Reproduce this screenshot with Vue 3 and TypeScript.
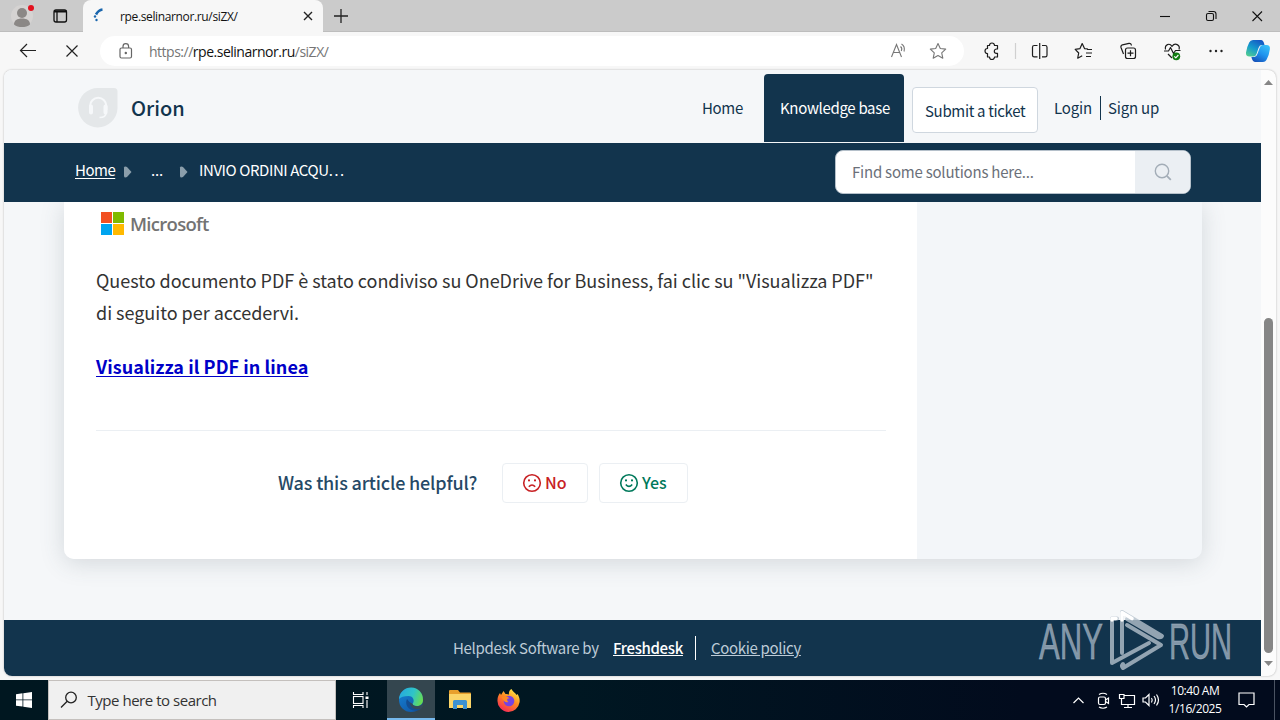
<script setup lang="ts">
interface Crumb { label: string; cls: string }
const crumbs: Crumb[] = [
  { label: 'Home', cls: 'crumb-home' },
  { label: '...', cls: 'crumb-dots' },
  { label: 'INVIO ORDINI ACQU…', cls: 'crumb-last' },
]
const address = { scheme: 'https://', host: 'rpe.selinarnor.ru', path: '/siZX/' }
</script>

<template>
  <div class="desktop">
    <header class="tabstrip">
      <div class="tab-left">
        <svg width="83" height="32" viewBox="0 0 83 32">
          <circle cx="22" cy="16" r="11" fill="#d5d3d2" />
          <circle cx="22" cy="13" r="5" fill="#8b8886" />
          <path d="M14 24.500c0-4 3-6 8-6s8 2 8 6c-2 2-5 2.500-8 2.500s-6-.5-8-2.500z" fill="#8b8886" />
          <circle cx="31" cy="8" r="3" fill="#e3121f" />
          <rect x="54" y="10" width="12.500" height="12" rx="2" fill="none" stroke="#111" stroke-width="1.300" />
          <path d="M54 11.500h12.500" stroke="#111" stroke-width="2" /><path d="M57 11v11" stroke="#111" stroke-width="1.300" />
        </svg>
      </div>
      <div class="tab">
        <svg width="37" height="32" viewBox="0 0 37 32" fill="none">
          <path d="M19.500 9.500c-3 .4-5 2.300-6.500 5" stroke="#1a66ad" stroke-width="2.600" />
          <circle cx="12" cy="16.500" r="1.200" fill="#1a66ad" /><circle cx="13.500" cy="20" r="1.200" fill="#1a66ad" />
        </svg>
        <span class="tab-title">rpe.selinarnor.ru/siZX/</span>
        <svg class="tab-close" width="10" height="10" viewBox="0 0 10 10"><path d="M1 1l8 8M9 1l-8 8" stroke="#222" stroke-width="1.400" /></svg>
      </div>
      <svg class="plus" width="14" height="14" viewBox="0 0 14 14"><path d="M7 0v14M0 7h14" stroke="#222" stroke-width="1.300" /></svg>
      <svg class="wincontrols" width="120" height="32" viewBox="0 0 120 32" fill="none" stroke="#111" stroke-width="1.100">
        <path d="M17 16.500h10" />
        <rect x="63.500" y="13.500" width="7" height="7" rx="1.500" />
        <path d="M65.500 11.500h5a2.500 2.500 0 0 1 2.500 2.500v5" />
        <path d="M109.500 11.500l9.500 9.500M119 11.500l-9.500 9.500" />
      </svg>
    </header>

    <div class="toolbar">
      <svg class="nav" width="100" height="38" viewBox="0 0 100 38" fill="none" stroke="#222" stroke-width="1.200">
        <path d="M36 18.500H20.500M27 12l-6.500 6.500L27 25M66.500 13.500l11 11M77.500 13.500l-11 11" />
      </svg>
      <div class="address">
        <svg class="lock" width="14" height="16" viewBox="0 0 14 16" fill="none" stroke="#666" stroke-width="1.200">
          <rect x="1" y="5" width="11.500" height="10" rx="1.500" /><path d="M4 5V3.500a2.800 2.800 0 0 1 5.600 0V5" /><circle cx="6.800" cy="10" r=".6" fill="#555" />
        </svg>
        <span class="url">{{ address.scheme }}<b>{{ address.host }}</b>{{ address.path }}</span>
        <svg class="addr-icons" width="80" height="30" viewBox="0 0 80 30" fill="none" stroke="#777" stroke-width="1.100">
          <path d="M7 21.500L12 9l5 12.500M8.800 17h6.500M16 11c1.300 1 1.500 3 .8 4.500M17 8.500c3 1.800 3.300 4.500 2.500 7.500" transform="translate(.5 -.5)" />
          <path d="M54 7.500l2.300 5 5.400.6-4 3.700 1.100 5.400-4.800-2.700-4.800 2.700 1.100-5.400-4-3.700 5.400-.6z" stroke-linejoin="round" />
        </svg>
      </div>
      <svg class="tools" width="316" height="38" viewBox="964 32 316 38" fill="none" stroke="#1d1d1d" stroke-width="1.200" stroke-linejoin="round">
        <path d="M987.500 45.500h2a2.500 2.500 0 0 1 5 0h3v3.500h-1a2.200 2.200 0 0 0 0 4.400h1V57h-3a2.500 2.500 0 0 1-5 0h-2v-3.500a2.500 2.500 0 0 1 0-5z" />
        <path d="M1015.500 43v16" stroke="#d0d0d0" />
        <path d="M1037.500 45.500h-3.300q-1.700 0-1.700 1.700v8q0 1.600 1.700 1.600h3.300M1042 45.500h3.300q1.700 0 1.700 1.700v8q0 1.600-1.700 1.600H1042M1039.700 43v16" />
        <path d="M1088 49l-3.500-.4-2.300-5-2.200 5-4.800.8 3.500 3.600-1 5.200 4.500-2.400M1087 49.500h5M1086 53h6M1086 56.500h5" />
        <rect x="1125.500" y="48" width="10" height="10.500" rx="2" />
        <path d="M1130.500 50.200v6M1127.500 53.200h6M1123.500 54l-2.500-6.500q-.5-2 1.500-2.700l6.500-1.500q2-.2 2.400 1.700v.6" />
        <path d="M1172 58l-4-4M1165.500 49.500c-1-5 4-7 6.500-3.200 3-4 8.500-1.500 7 3.200M1164 51h4.500l2-3.500 3 6 2-3h5" />
        <circle cx="1176.300" cy="56.300" r="3.900" fill="#107c10" stroke="none" /><path d="M1174.300 56.300l1.500 1.500 2.600-2.800" stroke="#fff" />
        <g fill="#222" stroke="none"><circle cx="1210.500" cy="51" r="1.200" /><circle cx="1216" cy="51" r="1.200" /><circle cx="1221.500" cy="51" r="1.200" /></g>
        <defs>
          <linearGradient id="cop" x1="0.700" y1="0" x2="0.100" y2="1"><stop offset="0" stop-color="#1558c4" /><stop offset=".5" stop-color="#159bcd" /><stop offset="1" stop-color="#55cf8e" /></linearGradient>
          <linearGradient id="cop2" x1="0.800" y1="0" x2="0.200" y2="1"><stop offset="0" stop-color="#38c0f8" /><stop offset=".5" stop-color="#1f93ee" /><stop offset="1" stop-color="#1550b8" /></linearGradient>
        </defs>
        <path d="M1253 40h8q2.500 0 3.500 5h-3q-2 0-3 3l-2 6q-1 2.500-3 2.500h-4q-4 0-3.500-4 1-6 3.200-10 1-2.500 3.800-2.500z" fill="url(#cop)" stroke="none" />
        <path d="M1262.500 45h4q3.800 0 3.400 4-.8 6-3 10-1.200 3-4 3h-7.500q-3 0-4-5h3q2 0 3-3l2.200-6q1-3 2.900-3z" fill="url(#cop2)" stroke="none" />
      </svg>
    </div>

    <main class="viewport">
      <div class="page">
        <div class="sitehead">
          <svg class="logo" width="40" height="40" viewBox="0 0 40 40">
            <path d="M20 0h16q3.500 0 3.500 3.500V20A19.700 19.700 0 1 1 20 0z" fill="#e4e7e9" />
            <path d="M12 22v-4a8.200 8.200 0 0 1 16.400 0v4" fill="none" stroke="#f6f8fa" stroke-width="2" />
            <path d="M13 18.500v6M27.500 18.500v6" fill="none" stroke="#f6f8fa" stroke-width="4" stroke-linecap="round" />
            <path d="M28 25c0 3-2 4.500-6.500 4.500" fill="none" stroke="#f6f8fa" stroke-width="1.600" />
          </svg>
          <span class="brand">Orion</span>
          <nav class="menu">
            <span class="m-home">Home</span>
            <span class="m-kb">Knowledge base</span>
            <span class="m-ticket">Submit a ticket</span>
            <span class="m-login">Login</span>
            <span class="m-signup">Sign up</span>
          </nav>
        </div>
        <div class="crumbbar">
          <template v-for="(c, i) in crumbs" :key="c.label">
            <svg v-if="i" class="sep" width="9" height="12" viewBox="0 0 9 12"><path d="M1 1.500q0-1 1.500-1L4 1l4.500 5L4 11l-1.500.5Q1 11.500 1 10z" fill="#8b9eab" /></svg>
            <span :class="c.cls">{{ c.label }}</span>
          </template>
          <div class="search">
            <span>Find some solutions here...</span>
            <div class="search-btn">
              <svg width="18" height="18" viewBox="0 0 18 18" fill="none" stroke="#a3adb7" stroke-width="1.400"><circle cx="8" cy="8" r="6.700" /><path d="M12.800 12.800l4 4" stroke-width="1.800" /></svg>
            </div>
          </div>
        </div>
        <div class="content">
          <div class="card">
            <article class="article">
              <div class="ms">
                <svg width="24" height="24" viewBox="0 0 24 24"><path d="M0 0h11v11H0z" fill="#f25022" /><path d="M12 0H23v11H12z" fill="#7fba00" /><path d="M0 12h11v11H0z" fill="#00a4ef" /><path d="M12 12h11v11H12z" fill="#ffb900" /></svg>
                <span>Microsoft</span>
              </div>
              <p class="body"><span class="l1">Questo documento PDF è stato condiviso su OneDrive for Business, fai clic su "Visualizza PDF"</span><br /><span class="l2">di seguito per accedervi.</span></p>
              <a class="link">Visualizza il PDF in linea</a>
              <div class="feedback">
                <span class="question">Was this article helpful?</span>
                <div class="vote no">
                  <svg width="20" height="20" viewBox="0 0 20 20" fill="none" stroke="currentColor" stroke-width="1.600"><circle cx="10" cy="10" r="8.300" /><path d="M6.800 13.800q3.200-3.600 6.400 0" /><path d="M7 6.300v2.200M13 6.300v2.200M6 7.400h2M12 7.400h2" stroke-width="1.200" /></svg>
                  <span>No</span>
                </div>
                <div class="vote yes">
                  <svg width="20" height="20" viewBox="0 0 20 20" fill="none" stroke="currentColor" stroke-width="1.600"><circle cx="10" cy="10" r="8.300" /><path d="M6.800 11.500q3.200 3.800 6.400 0" /><path d="M7 6.300v2.200M13 6.300v2.200M6 7.400h2M12 7.400h2" stroke-width="1.200" /></svg>
                  <span>Yes</span>
                </div>
              </div>
            </article>
          </div>
        </div>
        <footer class="foot">
          <span class="f-by">Helpdesk Software by</span>
          <span class="f-fd">Freshdesk</span>
          <span class="f-ck">Cookie policy</span>
        </footer>
      </div>
      <div class="scroll">
        <svg width="15" height="606" viewBox="0 0 15 606">
          <path d="M3 15l4.500-5 4.500 5z" fill="#868686" />
          <rect x="3" y="248" width="9" height="335" rx="4.500" fill="#868686" />
          <path d="M3 591l4.500 5 4.500-5z" fill="#868686" />
        </svg>
      </div>
    </main>

    <div class="taskbar">
      <div class="start"><svg width="16" height="16" viewBox="0 0 16 16"><path d="M0 2.200l6.500-.9v6.200H0zM7.300 1.200L16 0v7.500H7.300zM0 8.300h6.500v6.300L0 13.700zM7.300 8.300H16V16l-8.700-1.200z" fill="#fff" /></svg></div>
      <div class="tsearch">
        <svg width="18" height="18" viewBox="0 0 18 18" fill="none" stroke="#222" stroke-width="1.300"><circle cx="11" cy="6.500" r="5.300" /><path d="M7.200 10.300L1 16.500" /></svg>
        <span>Type here to search</span>
      </div>
      <div class="app">
        <svg width="18" height="18" viewBox="0 0 18 18" fill="none" stroke="#fff" stroke-width="1.100"><path d="M1.500 1v2.500h9.500V1M1.500 17v-2.500h9.500V17M15 1v3M15 9v8" /><rect x="1.500" y="5.500" width="9.500" height="7" /><path d="M13.500 5.500h3v2.500h-3z" fill="#fff" stroke="none" /></svg>
      </div>
      <div class="app active">
        <svg width="26" height="26" viewBox="0 0 26 26">
          <defs>
            <linearGradient id="eg" x1="0" y1="0.300" x2="1" y2="0.600"><stop offset="0" stop-color="#26a9df" /><stop offset=".55" stop-color="#2fc4c8" /><stop offset="1" stop-color="#68dc50" /></linearGradient>
            <linearGradient id="eb" x1="0" y1="0" x2=".7" y2="1"><stop offset="0" stop-color="#1684d6" /><stop offset="1" stop-color="#1058a8" /></linearGradient>
          </defs>
          <circle cx="13" cy="13" r="12" fill="url(#eb)" />
          <path d="M1 12A12 12 0 0 1 25 13c0 4-3 6-6 6s-5-1-4.500-2.200c2.500-2.500 1-7.800-4-7.800C6 9 2.500 10 1 12z" fill="url(#eg)" />
          <path d="M14.500 16.800C15 19 20 20.500 24 17.500l1.500 1c-1 2-2 3.200-3.700 4.500-7 1-11.500-3-10.500-8z" fill="#354b58" />
          <path d="M9 12c-2.500 5 1 11.500 8.500 11.700 2 .1 4-.9 5-2-5 1.500-10.500-1-10.500-6z" fill="#134d91" />
        </svg>
      </div>
      <div class="app">
        <svg width="24" height="22" viewBox="0 0 24 22"><path d="M1 2q0-1 1-1h8l2 2.500h10q1 0 1 1V8H1z" fill="#e8a02c" /><path d="M1 5h22v14H1z" fill="#fbd568" /><path d="M5 12.500q0-1.500 1.500-1.500h11q1.500 0 1.500 1.500V20h-4v-4H9v4H5z" fill="#3c91d1" /></svg>
      </div>
      <div class="app">
        <svg width="25" height="25" viewBox="0 0 25 25">
          <defs><linearGradient id="ff" x1=".8" y1="0" x2=".2" y2="1"><stop offset="0" stop-color="#fff04a" /><stop offset=".45" stop-color="#ff8a20" /><stop offset="1" stop-color="#f5215c" /></linearGradient></defs>
          <path d="M12.500 24A11.200 11.200 0 0 1 1.500 12c0-3 1-5 2.500-7l1 2 2.500-4 2 3q2-.2 3.500.5C12.500 4 13.500 2 15.500 1c1 2.500 4 4 5 6l1-1c2 3 2.500 6 2 8.500A11.300 11.300 0 0 1 12.500 24z" fill="url(#ff)" />
          <circle cx="13" cy="13" r="5.300" fill="#7543e3" /><path d="M5.500 9c3-1.500 6-1 8 1.500-3-.5-3 2-1 3.500-3 1-5.500-1-7-5z" fill="#ff8a22" />
        </svg>
      </div>
      <svg class="tray" width="120" height="40" viewBox="1060 680 120 40" fill="none" stroke="#fff" stroke-width="1.200">
        <path d="M1073.500 703l5-5 5 5" />
        <rect x="1098.500" y="697" width="7" height="7.500" rx="1.500" /><path d="M1105.500 700l3-2v5.500l-3-2M1099 694.500q4-2.500 8 0M1099 707q4 2.500 8 0" />
        <path d="M1124 695.500h10.500v9H1121.500v-5M1128 704.500v3M1124 707.500h8M1119.500 694.500h4.500v4h-4.500zM1121.500 698.500v3" />
        <path d="M1143 698h2.500l3.500-3.500v11l-3.500-3.500H1143zM1151.500 698q1.500 2 0 4.500M1154 696q3 4 0 8M1156.500 694.500q4 5.500 0 11" />
      </svg>
      <div class="clock"><span class="time">10:40 AM</span><span class="date">1/16/2025</span></div>
      <svg class="note" width="17" height="17" viewBox="0 0 17 17" fill="none" stroke="#fff" stroke-width="1.200"><path d="M1 1h15v11.500h-5L8.500 15 6 12.500H1z" /></svg>
      <i class="showdesk"></i>
    </div>

    <svg class="watermark" width="246" height="70" viewBox="1034 606 246 70">
      <g fill="#aebdcb" fill-opacity=".72" stroke="#aebdcb" stroke-opacity=".5" stroke-width=".8" font-family="'Liberation Sans Narrow', 'Liberation Sans', sans-serif" font-size="50">
        <text x="1039" y="659" textLength="64" lengthAdjust="spacingAndGlyphs">ANY</text>
        <text x="1169" y="659" textLength="63" lengthAdjust="spacingAndGlyphs">RUN</text>
      </g>
      <g fill="none" stroke-linejoin="round" stroke-linecap="round">
        <path d="M1117 618.500h-5v44.500l37-20M1122 653V612l40 24q-1 2-4 1L1127 619M1127 625l34 20-38 23q-2-2 0-4" stroke="#b4c1cc" stroke-opacity=".8" stroke-width="4" />
        <path d="M1112 620v-1.500h4M1122 620v-7.500l10 6" stroke="#fff" stroke-width="3.500" />
      </g>
    </svg>
  </div>
</template>

<style>
body { margin: 0; overflow: hidden; }
</style>
<style scoped>
* { box-sizing: border-box; }
.desktop { position: relative; width: 1280px; height: 720px; background: #f7f7f7; overflow: hidden; display: flex; flex-direction: column; font-family: "Open Sans", "Noto Sans", sans-serif; white-space: nowrap; }
svg { display: block; flex: none; }
.tabstrip { height: 32px; flex: none; background: #cbcbcb; display: flex; align-items: center; border-bottom: 1px solid #bdbdbd; }
.tab-left { width: 83px; height: 32px; }
.tab { width: 240px; height: 32px; background: #f7f7f7; border-radius: 8px 8px 0 0; display: flex; align-items: center; position: relative; top: .5px; }
.tab-title { width: 182px; font-size: 12px; color: #111; letter-spacing: -.36px; }
.tab-close { margin-left: 1px; }
.plus { margin-left: 11px; }
.wincontrols { margin-left: auto; margin-right: 17px; }
.toolbar { height: 38px; flex: none; display: flex; }
.address { width: 864px; height: 30px; margin-top: 4px; background: #fff; border-radius: 15px; display: flex; align-items: center; }
.lock { margin-left: 19px; }
.url { margin-left: 16px; width: 635px; font-size: 14px; color: #757575; letter-spacing: -.49px; }
.url b { font-weight: 400; color: #111; }
.addr-icons { margin-left: 100px; }
.viewport { flex: none; width: 1272px; height: 606px; margin-left: 4px; display: flex; border-radius: 8px; overflow: hidden; box-shadow: 0 0 2px #aaa; background: #fcfcfc; }
.page { width: 1257px; display: flex; flex-direction: column; background: #f5f7f9; font-family: "Noto Sans CJK SC", sans-serif; font-size: 16px; color: #12344d; }
.sitehead { height: 73px; flex: none; display: flex; background: #f5f7f9; }
.logo { margin: 18px 0 0 74px; }
.brand { margin: 24px 0 0 13px; width: 100px; font-size: 20px; font-weight: 500; line-height: 28px; letter-spacing: 0; }
.menu { margin-left: auto; display: flex; font-size: 15px; line-height: 24px; letter-spacing: -.33px; }
.m-home { margin-top: 26px; width: 62px; }
.m-kb { margin-top: 4px; width: 140px; height: 68px; padding: 22px 0 0 16px; background: #12344d; color: #fff; border-radius: 4px 4px 0 0; }
.m-ticket { margin: 17px 0 0 8px; width: 126px; height: 46px; padding: 11px 0 0 12px; background: #fff; border: 1px solid #cfd7df; border-radius: 4px; }
.m-login { margin: 26px 0 0 16px; width: 47px; height: 24px; border-right: 1px solid #12344d; letter-spacing: -.15px; }
.m-signup { margin: 26px 0 0 7px; width: 153px; letter-spacing: -.2px; }
.crumbbar { height: 59px; flex: none; background: #12344d; display: flex; color: #fff; font-size: 15px; line-height: 24px; }
.crumbbar > span { margin-top: 15px; }
.crumb-home { margin-left: 71px; width: 48px; letter-spacing: -.5px; text-decoration: underline; text-underline-offset: 2px; }
.sep { margin-top: 23px; }
.crumb-dots { width: 47px; padding-left: 19px; letter-spacing: -.2px; }
.crumb-last { padding-left: 11px; letter-spacing: -.42px; }
.search { margin: 7px 70px 0 auto; width: 356px; height: 44px; background: #fff; border: 1px solid #b5c0ca; border-radius: 8px; display: flex; overflow: hidden; color: #6b7079; letter-spacing: -.22px; }
.search span { flex: none; width: 299px; padding: 9px 0 0 16px; }
.search-btn { width: 56px; background: #ebeff3; padding: 12px 0 0 19px; }
.content { flex: 1; overflow: hidden; background: #f5f7f9; }
.card { margin-left: 60px; width: 1138px; height: 357px; background: #f3f6f9; border-radius: 0 0 10px 10px; box-shadow: 0 4px 24px rgba(60, 75, 90, .18); }
.article { width: 853px; height: 357px; background: #fff; border-radius: 0 0 0 10px; padding: 10px 32px 0; padding-right: 31px; color: #333; }
.ms { display: flex; padding-left: 5px; height: 24px; }
.ms span { margin-left: 5px; font-family: "Open Sans", sans-serif; font-weight: 600; font-size: 18.500px; line-height: 23px; color: #737373; letter-spacing: -.7px; }
.body { margin: 28px 0 0; font-size: 18px; line-height: 32px; letter-spacing: -.022px; }
.link { display: block; margin-top: 22px; font-size: 18px; line-height: 32px; font-weight: 700; letter-spacing: .06px; color: #0000c8; text-decoration: underline; text-underline-offset: 2px; text-decoration-thickness: 1px; }
.feedback { margin-top: 48px; border-top: 1px solid #ebeff3; padding: 32px 0 0 182px; display: flex; }
.question { width: 224px; font-size: 18px; line-height: 39px; font-weight: 500; letter-spacing: -.17px; color: #264966; }
.vote { height: 40px; border: 1px solid #ebeff3; border-radius: 4px; display: flex; align-items: center; padding-left: 19px; font-size: 16px; font-weight: 500; line-height: 36px; gap: 3px; }
.vote span { height: 38px; }
.no { width: 86px; color: #c82124; }
.yes { width: 89px; margin-left: 11px; color: #00795b; }
.foot { height: 56px; flex: none; background: #12344d; display: flex; align-items: center; padding-left: 449px; font-size: 15px; line-height: 24px; letter-spacing: -.33px; color: #bdcbd7; }
.f-by { width: 160px; }
.f-fd { width: 83px; color: #fff; font-weight: 500; text-decoration: underline; border-right: 1px solid #fff; }
.f-ck { margin-left: 15px; text-decoration: underline; }
.scroll { width: 15px; }
.taskbar { height: 40px; margin-top: 4px; flex: none; background: linear-gradient(90deg, #001720, #001722 45%, #020b1d 80%); display: flex; color: #fff; }
.start { width: 48px; padding: 12px 0 0 16px; }
.tsearch { width: 288px; background: #f0f0f0; border: 1px solid #c4c0bd; display: flex; padding: 10px 0 0 11px; font-size: 15px; line-height: 19px; letter-spacing: -.47px; color: #333; }
.tsearch span { margin-left: 9.500px; }
.app { width: 49px; display: flex; align-items: center; justify-content: center; }
.app:nth-child(3) { width: 51px; padding-right: 2px; }
.active { width: 48px; background: #34464f; border-bottom: 2px solid #76b9ed; padding-top: 2px; }
.tray { margin-left: auto; }
.clock { margin-left: -18px; width: 66px; display: flex; flex-direction: column; align-items: center; font-size: 12px; line-height: 18px; padding-top: 2px; letter-spacing: -.45px; }
.note { margin: 12px 0 0 10px; }
.showdesk { margin-left: 19px; width: 6px; border-left: 1px solid #4a5362; }
.watermark { position: absolute; left: 1034px; top: 606px; }
</style>
